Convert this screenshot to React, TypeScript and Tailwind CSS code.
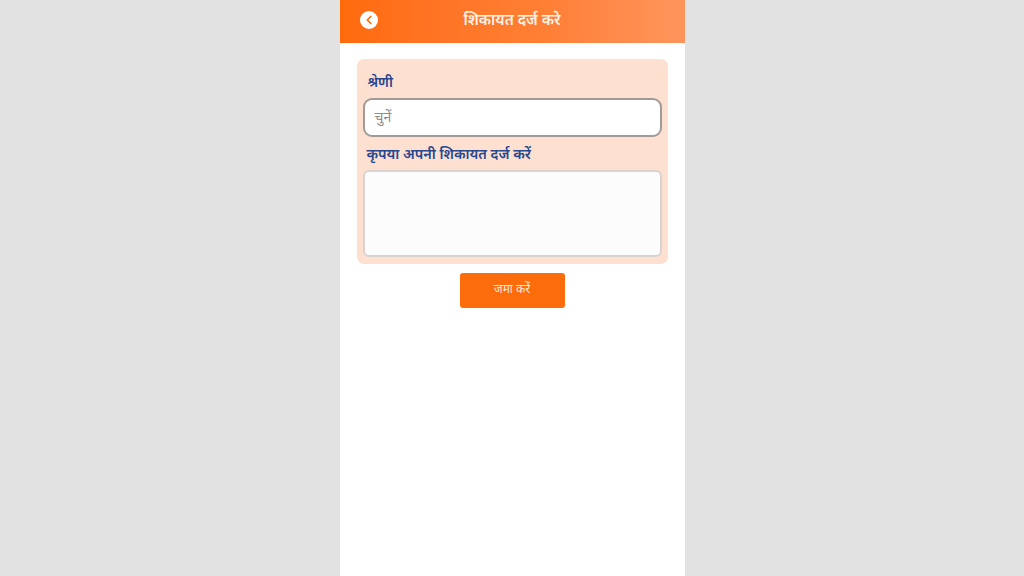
import { ChevronLeft } from "lucide-react";

const font = "[font-family:'Noto_Sans','Noto_Sans_Devanagari','Lohit_Devanagari','Noto_Sans_CJK_SC',sans-serif]";

export default function App() {
  return (
    <div className={`flex h-[576px] w-[1024px] justify-center overflow-hidden bg-[#e2e2e2] ${font}`}>
      <div className="flex h-full w-[345px] flex-col items-stretch bg-white">
        <header className="flex h-[43px] shrink-0 items-center bg-gradient-to-r from-[#ff6a0a] via-[#ff7f35] via-60% to-[#ff955c] pb-[3px] pl-[20px]">
          <button
            type="button"
            aria-label="वापस"
            className="grid h-[18px] w-[18px] place-items-center rounded-full bg-white text-[#ff6a0a]"
          >
            <ChevronLeft size={14} strokeWidth={3} />
          </button>
          <h1 className="ml-[86px] pb-[1px] text-[15.2px] font-semibold text-[#fff3e8]">शिकायत दर्ज करे</h1>
        </header>

        <main className="flex flex-col items-center px-[17px] pt-[16px]">
          <div className="flex h-[205px] w-[311px] flex-col rounded-[7px] bg-[#fee0d0] px-[6px]">
            <label className="ml-[5px] mt-[13px] h-[26px] text-[14px] font-semibold leading-[20px] text-[#27478f]">
              श्रेणी
            </label>
            <div className="flex h-[39px] items-center rounded-[9px] border-2 border-[#a09a98] bg-white px-[10px] pb-[2px] text-[14px] text-[#8c8c8c]">
              चुनें
            </div>
            <label className="ml-[4px] mt-[7px] h-[26px] text-[14.3px] font-semibold leading-[20px] text-[#27478f]">
              कृपया अपनी शिकायत दर्ज करें
            </label>
            <div className="h-[87px] rounded-[6px] border-2 border-[#d8d3d0] bg-[#fcfcfc]" />
          </div>
          <button
            type="button"
            className="mt-[9px] h-[35px] w-[105px] rounded-[3px] bg-[#fd6c0a] pb-[4px] text-[12px] text-[#ffe9da]"
          >
            जमा करें
          </button>
        </main>
      </div>
    </div>
  );
}
